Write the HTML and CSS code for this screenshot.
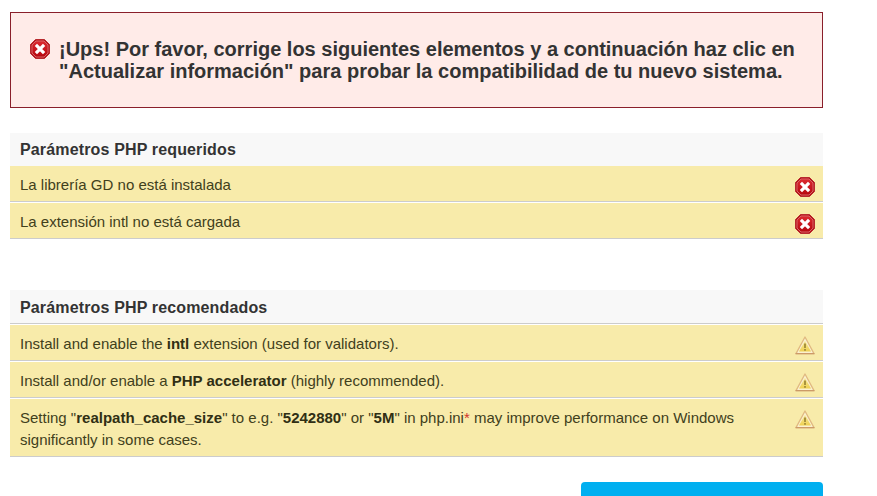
FILE: index.html
```html
<!DOCTYPE html>
<html lang="es">
<head>
    <meta charset="UTF-8">
    <meta name="viewport" content="width=device-width, initial-scale=1.0">
    <title>Compatibilidad del sistema</title>
    <link rel="stylesheet" href="styles.css">
</head>
<body>
    <svg width="0" height="0" class="defs">
        <defs>
            <linearGradient id="red" x1="0" y1="0" x2="0" y2="1">
                <stop offset="0" stop-color="#dc2a30"/>
                <stop offset="1" stop-color="#b60710"/>
            </linearGradient>
            <linearGradient id="yellow" x1="0" y1="0" x2="0" y2="1">
                <stop offset="0" stop-color="#f6e9a0"/>
                <stop offset="1" stop-color="#efd04e"/>
            </linearGradient>
            <symbol id="icon-error" viewBox="0 0 20 20">
                <path d="M5.5 .5h9l5 5v9l-5 5h-9l-5-5v-9z" fill="#b5121a" stroke="#b82a2e" stroke-linejoin="round"/>
                <path d="M6 2h8l4 4v8l-4 4H6l-4-4V6z" fill="url(#red)" stroke="#d86467"/>
                <path d="M5.9 5.9l8.2 8.2M14.1 5.9l-8.2 8.2" stroke="#fff" stroke-width="3.2"/>
            </symbol>
            <symbol id="icon-warning" viewBox="0 0 20 20">
                <path d="M10 1L19 17.6H1z" fill="#fbf1cf" stroke="#e0b980" stroke-width="1.3" stroke-linejoin="round"/>
                <path d="M1 17.7h18" stroke="#cc9a68" stroke-width="1.2" stroke-linecap="round"/>
                <path d="M10 4.8l6 10.8H4z" fill="url(#yellow)"/>
                <path d="M10 7.4v4.6M10 13v1.8" stroke="#a9933c" stroke-width="2"/>
            </symbol>
        </defs>
    </svg>
    <div class="container">
        <h3 class="error-block">
            <svg class="icon"><use href="#icon-error"/></svg>
            <span>¡Ups! Por favor, corrige los siguientes elementos y a continuación haz clic en<br>"Actualizar información" para probar la compatibilidad de tu nuevo sistema.</span>
        </h3>
        <ul class="required">
            <li class="title">Parámetros PHP requeridos</li>
            <li class="fail"><span>La librería GD no está instalada</span><svg class="icon"><use href="#icon-error"/></svg></li>
            <li class="fail"><span>La extensión intl no está cargada</span><svg class="icon"><use href="#icon-error"/></svg></li>
        </ul>
        <ul class="optional">
            <li class="title">Parámetros PHP recomendados</li>
            <li class="fail"><span>Install and enable the <strong>intl</strong> extension (used for validators).</span><svg class="icon"><use href="#icon-warning"/></svg></li>
            <li class="fail"><span>Install and/or enable a <strong>PHP accelerator</strong> (highly recommended).</span><svg class="icon"><use href="#icon-warning"/></svg></li>
            <li class="fail"><span>Setting "<strong>realpath_cache_size</strong>" to e.g. "<strong>5242880</strong>" or "<strong>5M</strong>" in php.ini<a class="note">*</a> may improve performance on Windows<br>significantly in some cases.</span><svg class="icon"><use href="#icon-warning"/></svg></li>
        </ul>
        <div class="button"></div>
    </div>
</body>
</html>
```
FILE: styles.css
```css
body {
    margin: 0;
    background: #fff;
    color: #333;
    font: 15px/22px "Liberation Sans", Arial, sans-serif;
}
.defs {
    display: block;
}
.container {
    width: 813px;
    margin: 12px 0 0 10px;
}
.icon {
    width: 20px;
    height: 20px;
    flex: none;
}
.error-block {
    display: flex;
    gap: 9px;
    box-sizing: border-box;
    height: 96px;
    margin: 0;
    padding: 25px 19px;
    border: 1px solid #8a1f2b;
    background: #ffebe8;
    font-size: 20px;
    line-height: 22px;
    white-space: nowrap;
}
.error-block .icon {
    margin-top: 1px;
}
ul {
    margin: 0;
    padding: 0;
    list-style: none;
}
.required {
    margin-top: 25px;
}
.optional {
    margin-top: 51px;
}
.title {
    height: 33px;
    padding-left: 10px;
    background: #f8f8f8;
    font-size: 16px;
    font-weight: bold;
    line-height: 33px;
    letter-spacing: 0.15px;
}
.optional .title {
    border-bottom: 1px solid #ccc;
    line-height: 35px;
}
.fail {
    display: flex;
    justify-content: space-between;
    padding: 8px 8px 5px 10px;
    border-top: 1px solid #fff;
    border-bottom: 1px solid #ccc;
    background: #f8ebaa;
    color: #41401c;
    white-space: nowrap;
}
.required .title + .fail {
    border-top: none;
}
.fail .icon {
    margin: 3px 0 -1px;
}
.fail strong {
    color: #302f14;
}
.note {
    color: #d0342c;
}
.button {
    width: 242px;
    height: 14px;
    margin: 25px 0 0 auto;
    border-radius: 4px 4px 0 0;
    background: #00aff0;
}
```
